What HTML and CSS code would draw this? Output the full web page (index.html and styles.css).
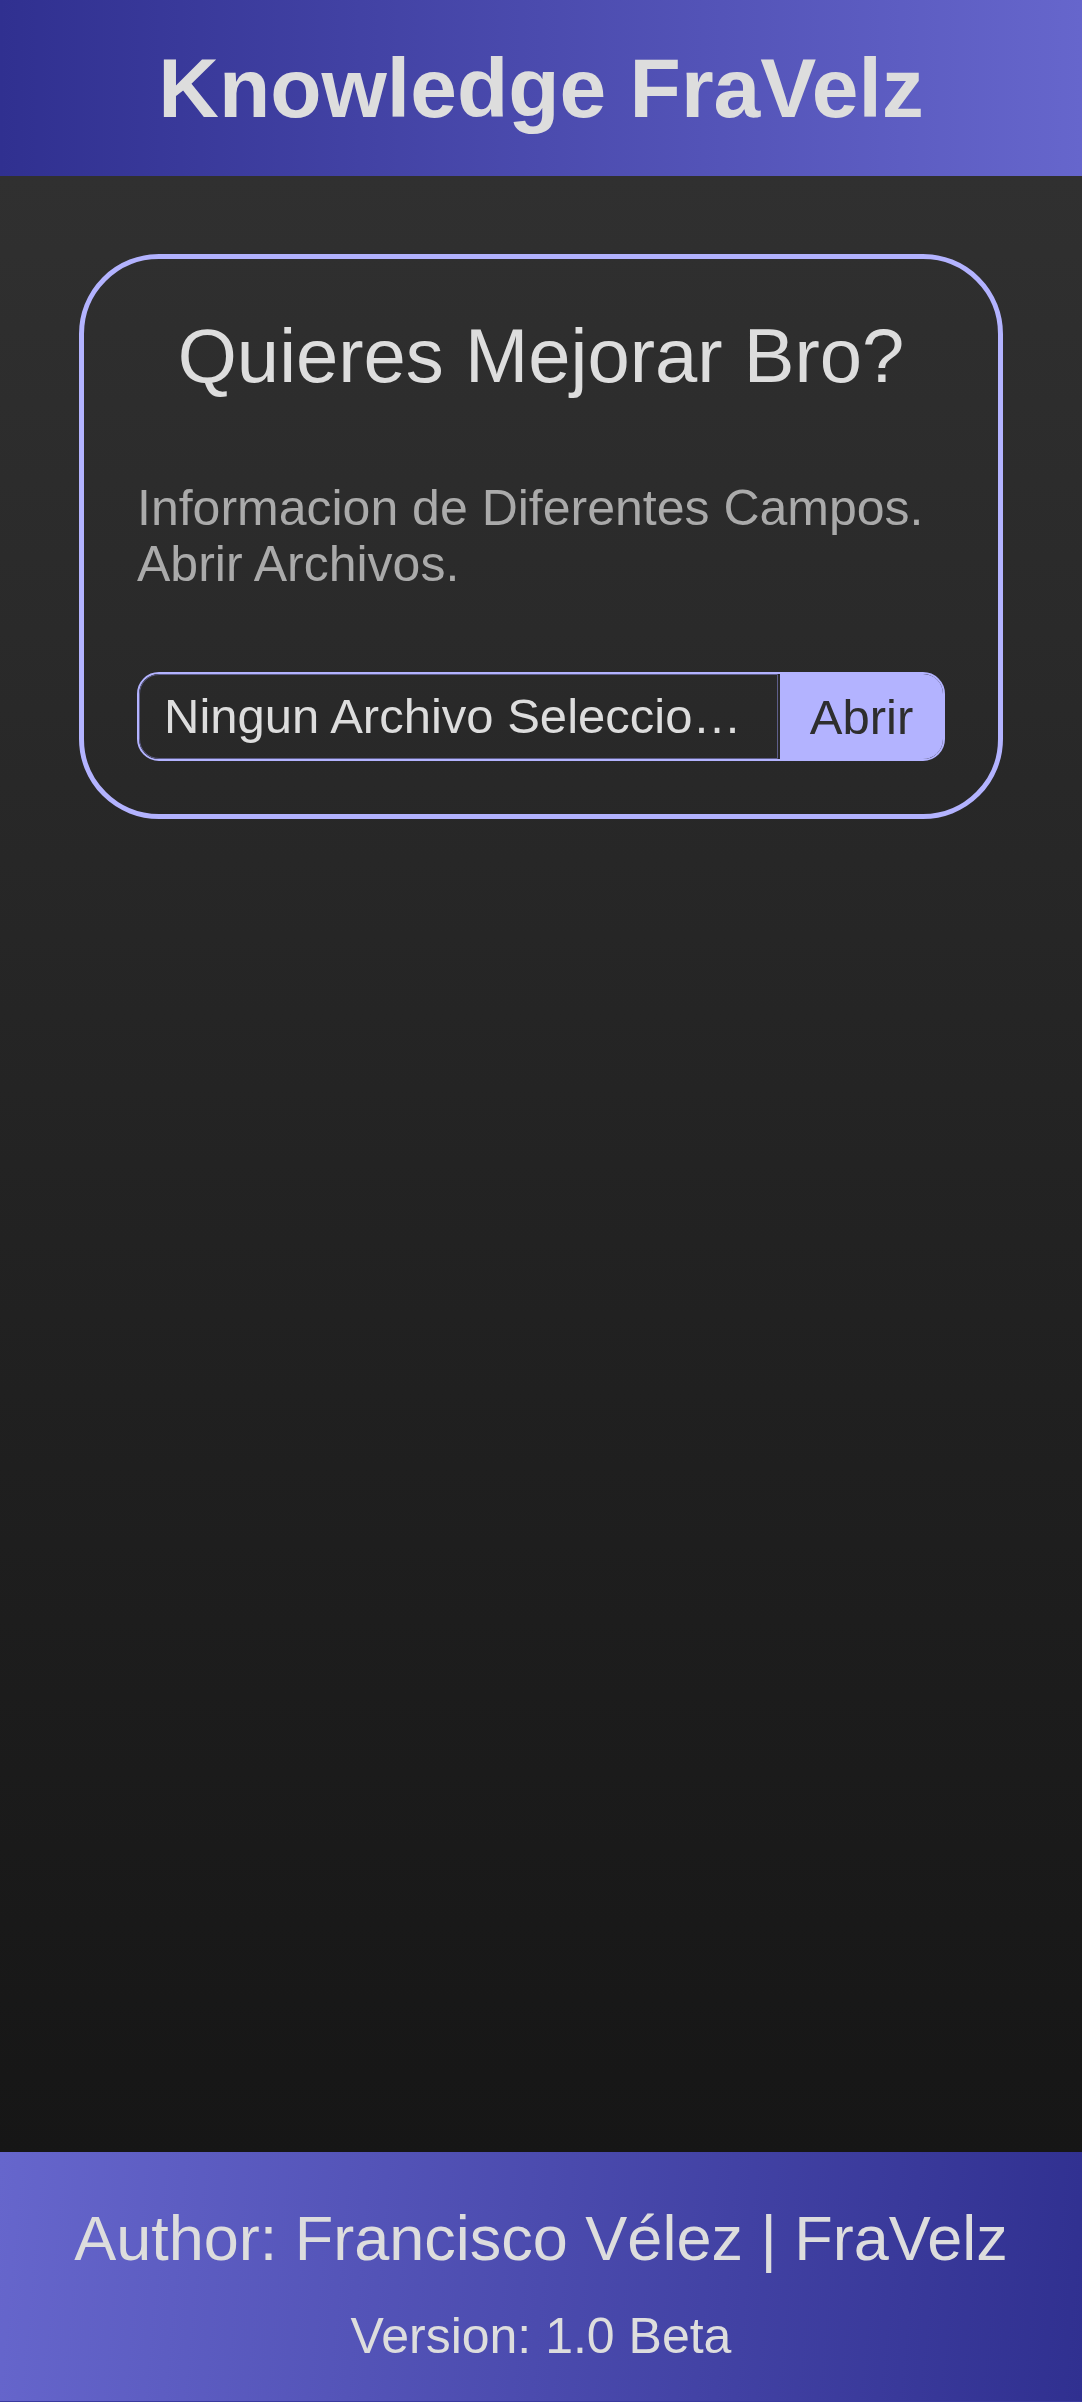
FILE: index.html
```html
<!DOCTYPE html>
<html lang="es">
<head>
<meta charset="utf-8">
<title>Knowledge FraVelz</title>
<link rel="stylesheet" href="styles.css">
</head>
<body>
<header class="site-header">
  <h1 class="site-title">Knowledge FraVelz</h1>
</header>
<main class="main">
  <section class="card">
    <h2 class="card-title">Quieres Mejorar Bro?</h2>
    <p class="card-text">Informacion de Diferentes Campos. Abrir Archivos.</p>
    <div class="file-group">
      <span class="file-name">Ningun Archivo Seleccionado</span>
      <span class="file-btn">Abrir</span>
    </div>
  </section>
</main>
<footer class="site-footer">
  <p class="author">Author: Francisco Vélez | FraVelz</p>
  <p class="version">Version: 1.0 Beta</p>
</footer>
</body>
</html>
```
FILE: styles.css
```css
* { box-sizing: border-box; }
html, body { margin: 0; padding: 0; }
body {
  font-family: "Liberation Sans", Arial, sans-serif;
  min-height: 2402px;
  display: flex;
  flex-direction: column;
  background: #1a1a1a;
  color: #dddddd;
}
.site-header {
  height: 176px;
  display: flex;
  align-items: center;
  justify-content: center;
  background: linear-gradient(90deg, #303090 0%, #6666cc 100%);
}
.site-title {
  margin: 0;
  font-size: 84px;
  font-weight: bold;
  color: #dddddd;
  line-height: normal;
}
.main {
  flex: 1;
  background: linear-gradient(180deg, #303030 0%, #161616 100%);
  padding-top: 78px;
}
.card {
  margin: 0 79px;
  border: 5px solid #b3b3ff;
  border-radius: 80px;
  padding: 53px;
  display: flex;
  flex-direction: column;
  gap: 80px;
}
.card-title {
  margin: 0;
  font-size: 76px;
  font-weight: normal;
  text-align: center;
  color: #dddddd;
  line-height: 88px;
}
.card-text {
  margin: 0;
  font-size: 50px;
  color: #aaaaaa;
  line-height: 56px;
}
.file-group {
  display: flex;
  height: 89px;
  border: 2px solid #b3b3ff;
  border-radius: 22px;
  overflow: hidden;
}
.file-name {
  flex: 1;
  min-width: 0;
  display: block;
  padding: 0 24px;
  border: 1px solid #5e5e8a;
  border-radius: 20px 0 0 20px;
  font-size: 49px;
  color: #dddddd;
  white-space: nowrap;
  overflow: hidden;
  text-overflow: ellipsis;
  line-height: 83px;
}
.file-btn {
  width: 163px;
  margin-left: 2px;
  background: #b3b3ff;
  color: #2e2e2e;
  font-size: 49px;
  display: flex;
  align-items: center;
  justify-content: center;
}
.site-footer {
  height: 250px;
  padding-top: 50px;
  background: linear-gradient(95deg, #6666cc 0%, #303090 100%);
  text-align: center;
  border-bottom: 1px solid #3a3aa0;
}
.author {
  margin: 0;
  font-size: 63px;
  color: #dddddd;
  line-height: normal;
}
.version {
  margin: 33px 0 0;
  font-size: 50px;
  color: #dddddd;
  line-height: normal;
}
```
